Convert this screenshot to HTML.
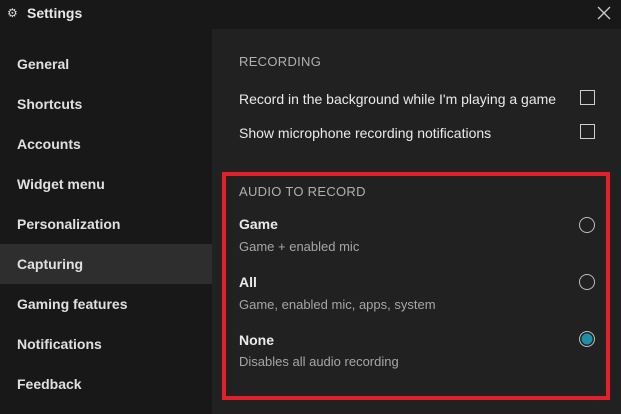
<!DOCTYPE html><html><head><style>
body{margin:0;width:621px;height:414px;background:#181818;font-family:"Liberation Sans",sans-serif;position:relative;overflow:hidden;color:#e8e8e8}
.a{position:absolute;white-space:nowrap}
.nav{left:17px;font-size:14px;font-weight:bold;color:#e0e0e0}
.t{font-size:14px;color:#eaeaea}
.s{font-size:13px;color:#a6a6a6}
.h{font-size:13px;color:#b0b0b0;letter-spacing:.3px}
.cb{width:13px;height:13px;border:1.5px solid #cfcfcf;}
.rb{width:14px;height:14px;border:1.5px solid #bdbdbd;border-radius:50%}
</style></head><body>
<div class="a" style="left:212px;top:29px;width:409px;height:385px;background:#212121"></div>
<div class="a" style="left:0;top:244px;width:212px;height:40px;background:#2e2e2e"></div>
<div class="a" style="left:7px;top:6px;font-size:12px;color:#ddd">⚙</div>
<div class="a" style="left:27px;top:5px;font-size:14px;font-weight:bold">Settings</div>
<svg class="a" style="left:597px;top:6px" width="14" height="14"><path d="M1 1L13 13M13 1L1 13" stroke="#ccc" stroke-width="1.3"/></svg>
<div class="a nav" style="top:56px">General</div>
<div class="a nav" style="top:96px">Shortcuts</div>
<div class="a nav" style="top:136px">Accounts</div>
<div class="a nav" style="top:176px">Widget menu</div>
<div class="a nav" style="top:216px">Personalization</div>
<div class="a nav" style="top:256px">Capturing</div>
<div class="a nav" style="top:296px">Gaming features</div>
<div class="a nav" style="top:336px">Notifications</div>
<div class="a nav" style="top:376px">Feedback</div>
<div class="a h" style="left:239px;top:54px">RECORDING</div>
<div class="a t" style="left:239px;top:91px">Record in the background while I'm playing a game</div>
<div class="a cb" style="left:580px;top:90px"></div>
<div class="a t" style="left:239px;top:125px">Show microphone recording notifications</div>
<div class="a cb" style="left:580px;top:124px"></div>
<div class="a" style="left:222px;top:172px;width:380px;height:216px;border:4px solid #e3202a;box-sizing:content-box;height:220px"></div>
<div class="a h" style="left:239px;top:184px">AUDIO TO RECORD</div>
<div class="a t" style="left:239px;top:216px;font-weight:bold">Game</div>
<div class="a s" style="left:239px;top:239px">Game + enabled mic</div>
<div class="a rb" style="left:579px;top:217px"></div>
<div class="a t" style="left:239px;top:274px;font-weight:bold">All</div>
<div class="a s" style="left:239px;top:297px">Game, enabled mic, apps, system</div>
<div class="a rb" style="left:579px;top:274px"></div>
<div class="a t" style="left:239px;top:332px;font-weight:bold">None</div>
<div class="a s" style="left:239px;top:354px">Disables all audio recording</div>
<div class="a rb" style="left:579px;top:331px;background:#1f8fa6;box-shadow:inset 0 0 0 1.5px #212121"></div>
<div class="a" style="left:547px;top:399px;font-size:11px;color:#222">wsxdn.com</div>
</body></html>
